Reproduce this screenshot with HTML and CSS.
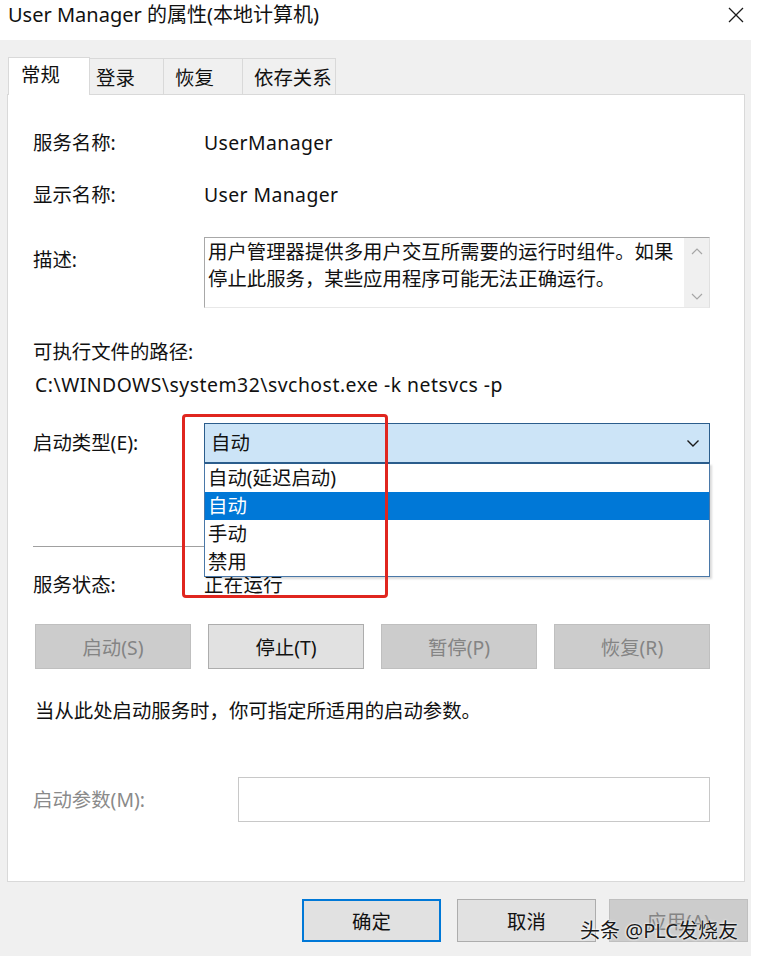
FILE: index.html
```html
<!DOCTYPE html>
<html lang="zh-CN">
<head>
  <meta charset="UTF-8">
  <title>User Manager 的属性(本地计算机)</title>
  <link rel="stylesheet" href="styles.css">
</head>
<body>
  <div class="window">
    <div class="titlebar">
      <span class="title">User Manager 的属性(本地计算机)</span>
      <svg class="close" width="16" height="16" viewBox="0 0 16 16">
        <path d="M1 1 L15 15 M15 1 L1 15" stroke="#1a1a1a" stroke-width="1.3" fill="none"/>
      </svg>
    </div>

    <div class="dialog">
      <div class="tabs">
        <div class="tab active">常规</div>
        <div class="tab">登录</div>
        <div class="tab">恢复</div>
        <div class="tab">依存关系</div>
      </div>

      <div class="panel">
        <div class="row first">
          <span class="label">服务名称:</span>
          <span class="value">UserManager</span>
        </div>
        <div class="row">
          <span class="label">显示名称:</span>
          <span class="value">User Manager</span>
        </div>
        <div class="row desc-row">
          <span class="label">描述:</span>
          <div class="desc">
            <div class="desc-text">用户管理器提供多用户交互所需要的运行时组件。如果<br>停止此服务，某些应用程序可能无法正确运行。</div>
            <div class="scrollbar">
              <svg width="14" height="10" viewBox="0 0 14 10"><path d="M2 7 L7 2 L12 7" stroke="#a6a6a6" stroke-width="1.2" fill="none"/></svg>
              <svg width="14" height="10" viewBox="0 0 14 10"><path d="M2 3 L7 8 L12 3" stroke="#a6a6a6" stroke-width="1.2" fill="none"/></svg>
            </div>
          </div>
        </div>

        <div class="line exe-label">可执行文件的路径:</div>
        <div class="line path">C:\WINDOWS\system32\svchost.exe -k netsvcs -p</div>

        <div class="row startup-row">
          <span class="label">启动类型(E):</span>
          <div class="combo-wrap">
            <div class="combo">
              <span>自动</span>
              <svg width="14" height="10" viewBox="0 0 14 10"><path d="M1.5 2.5 L7 8 L12.5 2.5" stroke="#1a1a1a" stroke-width="1.4" fill="none"/></svg>
            </div>
            <ul class="dropdown">
              <li>自动(延迟启动)</li>
              <li class="selected">自动</li>
              <li>手动</li>
              <li>禁用</li>
            </ul>
          </div>
        </div>

        <hr class="sep">

        <div class="row status-row">
          <span class="label">服务状态:</span>
          <span class="value">正在运行</span>
        </div>

        <div class="actions">
          <button class="btn" disabled>启动(S)</button>
          <button class="btn">停止(T)</button>
          <button class="btn" disabled>暂停(P)</button>
          <button class="btn" disabled>恢复(R)</button>
        </div>

        <div class="line hint">当从此处启动服务时，你可指定所适用的启动参数。</div>

        <div class="row param-row">
          <span class="label muted">启动参数(M):</span>
          <div class="param-input"></div>
        </div>

        <div class="mark"></div>
      </div>

      <div class="footer">
        <button class="btn ok">确定</button>
        <button class="btn cancel">取消</button>
        <button class="btn" disabled>应用(A)</button>
      </div>

      <div class="watermark">头条 @PLC发烧友</div>
    </div>
  </div>
</body>
</html>
```

FILE: styles.css
```css
* {
  box-sizing: border-box;
}
body {
  margin: 0;
  background: #fff;
  font-family: "Noto Sans", "Noto Sans CJK SC", sans-serif;
  font-size: 19.4px;
  color: #111;
}
.window {
  width: 758px;
  height: 956px;
  overflow: hidden;
}
.titlebar {
  height: 40px;
  display: flex;
  align-items: flex-start;
  justify-content: space-between;
  padding: 0 14px 0 8px;
  background: #fff;
}
.title {
  font-size: 20px;
  line-height: 30px;
}
.close {
  margin-top: 7px;
}

.dialog {
  position: relative;
  width: 751px;
  height: 916px;
  background: #f0f0f0;
  padding-top: 17px;
}

/* tabs */
.tabs {
  display: flex;
  align-items: flex-end;
  margin-left: 8px;
  height: 37px;
}
.tab {
  height: 36px;
  line-height: 38px;
  padding-left: 11px;
  white-space: nowrap;
  border: 1px solid #d9d9d9;
  border-bottom: none;
  border-left: none;
  background: #f0f0f0;
}
.tab:nth-child(2) { width: 74px; padding-left: 6px; }
.tab:nth-child(3) { width: 79px; }
.tab:nth-child(4) { width: 93px; }
.tab.active {
  position: relative;
  z-index: 1;
  width: 82px;
  height: 38px;
  margin-bottom: -1px;
  padding-left: 12px;
  line-height: 34px;
  background: #fff;
  border-left: 1px solid #d9d9d9;
}

/* panel */
.panel {
  position: relative;
  margin-left: 7px;
  width: 738px;
  height: 788px;
  background: #fff;
  border: 1px solid #d9d9d9;
  padding: 35px 34px 0 25px;
}
.row {
  display: flex;
  margin-top: 26px;
  line-height: 26px;
}
.row.first {
  margin-top: 0;
}
.label {
  flex: 0 0 171px;
}
.muted {
  color: #8a8a8a;
}
.value {
  letter-spacing: 0.4px;
}

.desc-row {
  margin-top: 29px;
}
.desc-row .label {
  padding-top: 10px;
}
.desc {
  flex: 1;
  height: 71px;
  display: flex;
  border: 1px solid #a8a8a8;
  border-right-color: #e0e0e0;
  border-bottom-color: #e8e8e8;
}
.desc-text {
  flex: 1;
  padding: 0 0 0 3px;
  line-height: 27px;
  white-space: nowrap;
}
.scrollbar {
  width: 25px;
  background: #f0f0f0;
  display: flex;
  flex-direction: column;
  align-items: center;
  justify-content: space-between;
  padding: 9px 0 6px;
}

.line {
  line-height: 26px;
}
.exe-label {
  margin-top: 31px;
}
.path {
  margin-top: 7px;
  padding-left: 2px;
  letter-spacing: 0.5px;
}

.startup-row {
  margin-top: 25px;
  line-height: 40px;
}
.combo-wrap {
  position: relative;
  flex: 1;
}
.combo {
  height: 40px;
  display: flex;
  align-items: center;
  justify-content: space-between;
  padding: 0 9px 0 6px;
  background: #cce4f7;
  border: 1px solid #2b5d8c;
}
.dropdown {
  position: absolute;
  z-index: 2;
  top: 100%;
  left: 0;
  right: 0;
  margin: 0;
  padding: 0;
  list-style: none;
  background: #fff;
  border: 1px solid #4a78a8;
  border-top-color: #2b5d8c;
  box-shadow: 2px 2px 2px rgba(0, 0, 0, 0.15);
}
.dropdown li {
  height: 28px;
  line-height: 28px;
  padding-left: 3px;
}
.dropdown li.selected {
  background: #0078d7;
  color: #fff;
}

.sep {
  margin: 83px 0 0;
  border: none;
  border-top: 1px solid #a0a0a0;
}
.status-row {
  margin-top: 25px;
}

.actions {
  display: grid;
  grid-template-columns: repeat(4, 1fr);
  gap: 17px;
  margin: 26px 0 0 2px;
}
.btn {
  height: 45px;
  font: inherit;
  color: #111;
  background: #e1e1e1;
  border: 1px solid #adadad;
  padding: 0;
}
.btn:disabled {
  color: #848484;
  background: #cccccc;
  border-color: #bfbfbf;
}

.hint {
  margin-top: 29px;
  padding-left: 2px;
}
.param-row {
  margin-top: 53px;
  line-height: 45px;
}
.param-row .label {
  flex-basis: 205px;
}
.param-input {
  flex: 1;
  height: 45px;
  border: 1px solid #c8c8c8;
  background: #fff;
}

/* red highlight drawn over the startup type list */
.mark {
  position: absolute;
  z-index: 3;
  left: 174px;
  top: 319px;
  width: 206px;
  height: 184px;
  border: 3px solid #e0261f;
  border-radius: 4px;
}

.footer {
  display: flex;
  justify-content: flex-end;
  margin-top: 17px;
  padding-right: 3px;
}
.footer .btn {
  width: 139px;
  height: 43px;
}
.footer .btn.ok {
  border: 2px solid #0078d7;
}
.footer .btn.cancel {
  margin: 0 13px 0 16px;
}

.watermark {
  position: absolute;
  right: 13px;
  bottom: 12px;
  font-size: 20px;
  color: #1a1a1a;
  text-shadow: 0 0 3px #fff, 0 0 2px #fff;
}
```
